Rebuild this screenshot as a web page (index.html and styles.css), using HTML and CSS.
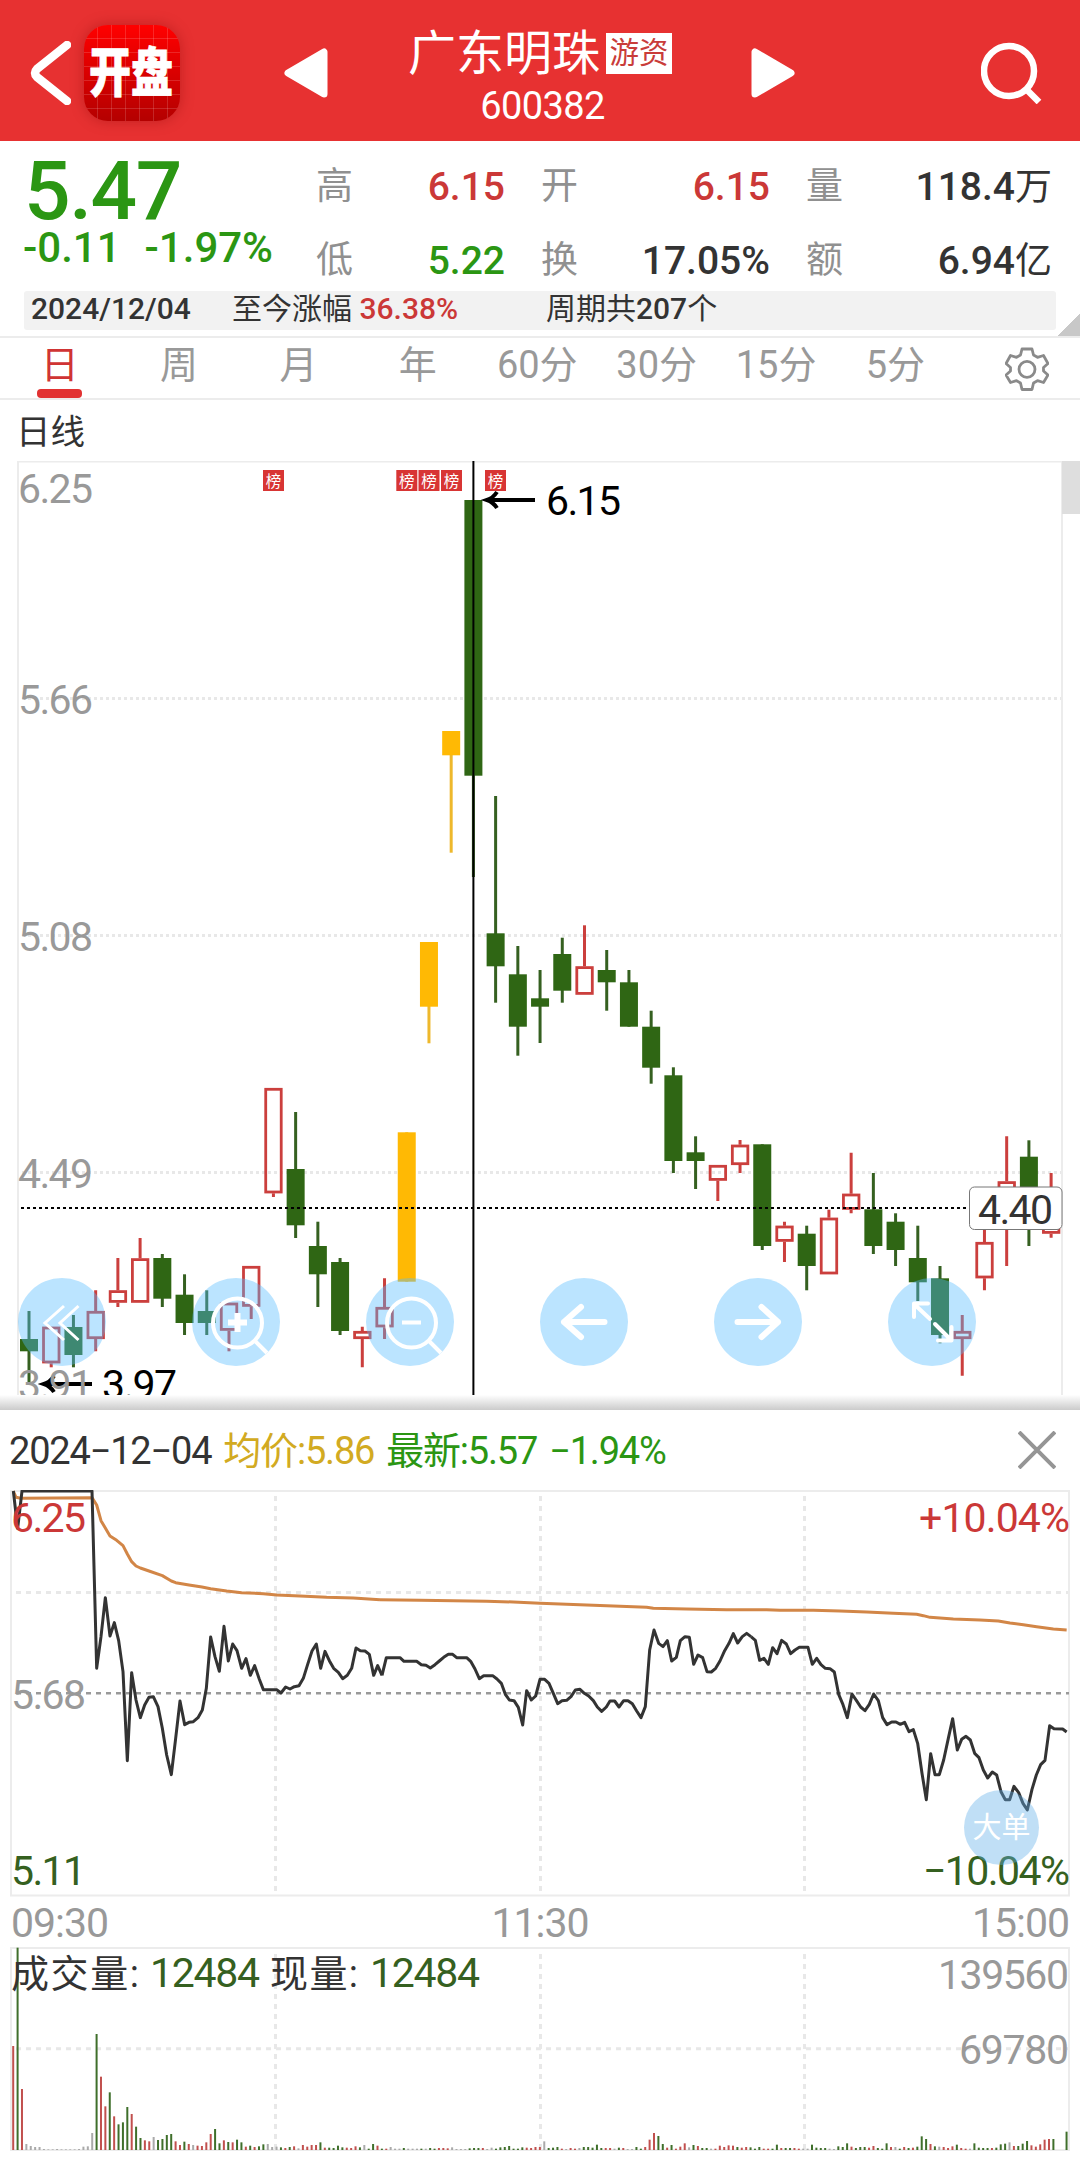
FILE: index.html
```html
<!DOCTYPE html>
<html lang="zh-CN">
<head>
<meta charset="UTF-8">
<title>广东明珠 600382</title>
<meta name="viewport" content="width=device-width, initial-scale=1.0">
<link rel="stylesheet" href="styles.css">
</head>
<body>

<!-- Header -->
<header class="header">
  <svg class="back" viewBox="0 0 41 64"><path d="M37 4 L7 28 Q3 32 7 36 L37 60"/></svg>
  <div class="logo"><span>开盘</span></div>
  <svg class="prev" viewBox="0 0 44 50"><path d="M4 25 L40 4 V46 Z"/></svg>
  <div class="title">
    <div class="name">广东明珠<span class="tag">游资</span></div>
    <div class="code">600382</div>
  </div>
  <svg class="next" viewBox="0 0 44 50"><path d="M40 25 L4 4 V46 Z"/></svg>
  <svg class="search" viewBox="0 0 61 62"><circle cx="28" cy="29" r="25"/><path d="M46 48 L58 60"/></svg>
</header>

<!-- Quote -->
<section class="quote">
  <div class="quote-top">
    <div class="last">
      <div class="price">5.47</div>
      <div class="change"><span>-0.11</span><span>-1.97%</span></div>
    </div>
    <div class="stats">
      <div class="stat"><label>高</label><b class="up">6.15</b></div>
      <div class="stat"><label>开</label><b class="up">6.15</b></div>
      <div class="stat"><label>量</label><b>118.4<small>万</small></b></div>
      <div class="stat"><label>低</label><b class="down">5.22</b></div>
      <div class="stat"><label>换</label><b>17.05%</b></div>
      <div class="stat"><label>额</label><b>6.94<small>亿</small></b></div>
    </div>
  </div>
  <div class="period">
    <span class="date">2024/12/04</span>
    <span>至今涨幅 <b class="up">36.38%</b></span>
    <span>周期共<b>207</b>个</span>
  </div>
  <i class="corner"></i>
</section>

<!-- Period tabs -->
<nav class="tabs">
  <a class="active">日</a>
  <a>周</a>
  <a>月</a>
  <a>年</a>
  <a>60分</a>
  <a>30分</a>
  <a>15分</a>
  <a>5分</a>
  <svg class="gear" viewBox="0 0 44 44">
    <path d="M17 2 H27 L28.5 8 L32.5 10.3 L38.5 8.5 L43 16.5 L38.5 20.5 V24 L43 28 L38.5 35.5 L32.5 33.7 L28.5 36 L27 42.5 H17 L15.5 36 L11.5 33.7 L5.5 35.5 L1 28 L5.5 24 V20.5 L1 16.5 L5.5 8.5 L11.5 10.3 L15.5 8 Z"/>
    <circle cx="22" cy="22.3" r="8"/>
  </svg>
</nav>

<h3 class="chart-title">日线</h3>

<!-- K line -->
<div class="kline">
  <svg id="kline" viewBox="0 461 1080 934">
    <g class="grid dots">
      <path d="M22 698.5 H1062 M22 935.5 H1062 M22 1172.5 H1062"/>
    </g>
    <path class="frame" d="M18 1395 V461.5 H1062 V1395"/>
    <rect class="scroll" x="1062" y="461" width="18" height="53"/>
    <g id="candles"></g>
    <g id="marks"></g>
    <path class="cross" d="M473.4 461 V1395"/>
    <path class="cross dots" d="M21 1208 H968"/>
    <path class="pointer" d="M535 500 H489 M497 492 Q493 498 487 500 Q493 502 497 508"/>
    <text class="num black" x="546" y="515" textLength="75">6.15</text>
    <path class="pointer" d="M92 1384 H45 M54 1376 Q50 1382 44 1384 Q50 1386 54 1392"/>
    <text class="num black" x="102" y="1399" textLength="75">3.97</text>
    <g class="num gray">
      <text x="18" y="502.5" textLength="75">6.25</text>
      <text x="18" y="714" textLength="75">5.66</text>
      <text x="18" y="951" textLength="75">5.08</text>
      <text x="18" y="1188" textLength="75">4.49</text>
      <text x="18" y="1399" textLength="75">3.91</text>
    </g>
    <rect class="price-box" x="969.5" y="1187" width="92.5" height="42.5" rx="5"/>
    <text class="num dark" x="978" y="1223.5" textLength="75">4.40</text>
  </svg>
  <div class="tools">
    <button><svg viewBox="0 0 88 88"><path class="thin" d="M46 28 L27 45 L46 62 M60.5 28 L42 45 L60.5 62"/></svg></button>
    <button><svg viewBox="0 0 88 88"><circle cx="45.5" cy="45" r="24.5"/><path d="M63 63 L75 75"/><path class="bold" d="M36 44.5 H55 M45.5 35 V54"/></svg></button>
    <button><svg viewBox="0 0 88 88"><circle cx="45.5" cy="45" r="24.5"/><path d="M63 63 L75 75 M36 44.5 H55"/></svg></button>
    <button><svg viewBox="0 0 88 88"><path class="bold round" d="M64.5 44 H24 M41 29 L24 44 L41 59"/></svg></button>
    <button><svg viewBox="0 0 88 88"><path class="bold round" d="M23.5 44 H64 M47.5 29 L64 44 L47.5 59"/></svg></button>
    <button><svg viewBox="0 0 88 88"><path class="round" d="M42 41 L26 26 M40 25.5 H26 V39 M47 46 L63 62 M63.5 49 V62.5 H50"/></svg></button>
  </div>
</div>

<!-- Intraday panel -->
<section class="intraday">
  <div class="shadow"></div>
  <div class="intraday-head">
    <span class="day">2024−12−04</span>
    <span class="avg">均价:5.86</span>
    <span class="new">最新:5.57</span>
    <span class="new">−1.94%</span>
    <svg class="close" viewBox="0 0 38 38"><path d="M1 1 L37 37 M37 1 L1 37"/></svg>
  </div>

  <div class="minute">
    <svg viewBox="0 1490 1080 407">
      <path class="frame" d="M11 1491 H1069 V1895.5 H11 Z"/>
      <g class="grid dash">
        <path d="M16 1592.5 H1068"/>
        <path d="M275.5 1496 V1894 M540.5 1496 V1894 M804.5 1496 V1894"/>
      </g>
      <path class="zero" d="M16 1693.3 H1069"/>
      <!-- average price -->
      <g class="avg-line" transform="translate(0 1450) scale(.33333)">
        <polyline points="40,123 48,142 62,145 276,143 290,165 303,212 330,258 350,271 369,287 382,312 395,335 408,348 421,354 447,363 487,377 514,393 527,398 567,405 606,411 632,416 680,423 725,428 790,431 830,435 900,438 980,442 1060,444 1140,449"/>
        <polyline transform="translate(1140 300)" points="0,149 60,150 120,151 220,152 320,154 400,156 480,160 560,163 640,166 700,168 760,170 800,172 820,175 920,177 1040,179 1080,179"/>
        <polyline transform="translate(2220 360)" points="0,119 80,119 120,121 220,121 300,123 380,126 460,130 530,133 550,137 570,142 640,147 720,150 775,153 810,159 850,164 890,170 940,177 980,180"/>
      </g>
      <!-- price -->
      <g class="price-line" transform="translate(0 1450) scale(.33333)">
        <polyline points="40,123 53,235 66,123 276,123 290,655 303,560 316,443 330,558 343,518 356,572 369,665 382,932 395,668 408,750 421,803 434,765 447,742 460,740 474,770 487,835 500,915 514,974 527,865 540,753 554,824 567,817 580,815 594,803 607,780 619,715 632,561 645,620 658,664 672,529 685,633 698,582 711,602 725,655 738,626 751,676 764,647 778,688 790,719 830,719 843,729 857,711 870,717 883,710 897,707 910,685 923,643 936,603 949,582 962,655 975,604 988,632 1001,655 1015,667 1028,686 1042,676 1055,655 1068,594 1081,602 1095,603 1108,613 1121,676 1133,647 1146,676"/>
        <polyline transform="translate(1140 300)" points="6,376 19,323 60,323 72,334 110,334 124,344 138,346 151,354 165,344 178,333 191,322 205,313 218,313 230,323 260,323 272,334 285,357 298,386 311,377 338,377 351,387 364,400 376,433 388,450 402,452 415,472 428,525 440,422 454,450 467,438 480,388 494,388 507,400 520,430 533,461 546,452 560,451 573,440 586,420 600,418 613,430 626,438 640,452 652,471 665,484 679,471 690,453 704,453 717,471 731,452 744,452 757,461 770,483 783,503 796,470 809,300 822,240 836,280 849,290 862,272 875,333 889,322 901,272 915,260 928,262 941,343 954,315 968,323 981,365 994,366 1007,355 1020,333 1034,302 1047,280 1060,251 1073,279 1087,260 1100,250 1113,260"/>
        <polyline transform="translate(2220 360)" points="33,200 46,211 59,271 72,265 85,283 98,233 111,251 125,211 139,222 152,251 165,240 178,232 204,232 217,283 230,265 243,284 256,295 270,296 283,306 296,373 309,404 322,443 336,372 349,391 362,411 375,422 388,403 401,372 415,392 428,443 441,464 455,456 468,456 481,463 494,457 507,485 520,479 533,520 546,610 559,689 572,551 585,614 598,614 611,570 625,505 638,446 652,540 665,508 678,499 691,510 704,550 717,563 730,600 743,624 757,606 770,615 783,665 796,689 809,689 822,649 836,668 849,700 862,720 876,658 889,615 902,584 915,571 929,467 942,476 968,477 980,486"/>
      </g>
      <text class="num red" x="11" y="1532" textLength="75">6.25</text>
      <text class="num gray" x="11" y="1709" textLength="75">5.68</text>
      <text class="num green" x="11" y="1885" textLength="75">5.11</text>
      <text class="num red" x="919" y="1532" textLength="151">+10.04%</text>
      <text class="num green" x="923" y="1885" textLength="147">−10.04%</text>
    </svg>
    <button class="big-order">大单</button>
  </div>

  <div class="times"><span>09:30</span><span>11:30</span><span>15:00</span></div>

  <svg class="volume" viewBox="0 1947 1080 205">
    <path class="frame" d="M11 1948 H1069 V2150 H11 Z"/>
    <g class="grid dash">
      <path d="M16 2048.7 H1068"/>
      <path d="M275.5 1954 V2149 M540.5 1954 V2149 M804.5 1954 V2149"/>
    </g>
    <g id="volume"></g>
    <text class="label dark" x="11" y="1986.5" textLength="128">成交量:</text>
    <text class="num green" x="150" y="1987" textLength="110">12484</text>
    <text class="label dark" x="270" y="1986.5" textLength="88">现量:</text>
    <text class="num green" x="370" y="1987" textLength="110">12484</text>
    <text class="num gray" x="938" y="1989" textLength="131">139560</text>
    <text class="num gray" x="959" y="2064" textLength="110">69780</text>
  </svg>
</section>

<script>
const NS = 'http://www.w3.org/2000/svg';

function add(parent, tag, attrs, text) {
  const el = document.createElementNS(NS, tag);
  for (const key in attrs) el.setAttribute(key, attrs[key]);
  if (text) el.textContent = text;
  parent.appendChild(el);
}

// [type, high, body top, body bottom, low]   g: down  r: up  y: limit up
const candles = [
  ['g', 1311, 1339, 1351.3, 1382.7],
  ['r', 1326.7, 1326.7, 1363.3, 1367.3],
  ['g', 1315, 1327, 1355, 1367.3],
  ['r', 1290.3, 1311, 1339, 1351.3],
  ['r', 1258, 1290.3, 1302.7, 1307],
  ['r', 1238, 1258.3, 1302.7, 1302.7],
  ['g', 1254, 1258, 1298.7, 1307],
  ['g', 1274.3, 1294.7, 1323, 1335],
  ['g', 1290.3, 1311, 1323, 1335],
  ['r', 1302.7, 1302.7, 1330.7, 1351.3],
  ['r', 1266, 1266, 1306.7, 1319],
  ['r', 1088, 1088, 1193.3, 1197],
  ['g', 1112, 1169, 1225.3, 1238],
  ['g', 1221.7, 1246, 1274.3, 1307],
  ['g', 1258, 1262, 1331, 1335],
  ['r', 1326.7, 1331, 1339, 1367.3],
  ['r', 1278.3, 1307, 1327.3, 1339],
  ['y', 1132.3, 1132.3, 1281.7, 1281.7],
  ['y', 942, 942, 1006.7, 1043.3],
  ['y', 731, 731, 755.3, 852.7],
  ['g', 500, 500, 775.7, 877],
  ['g', 796, 933.3, 966.3, 1002.7],
  ['g', 946, 974.3, 1026.7, 1055.7],
  ['g', 970, 998.3, 1006.7, 1043],
  ['g', 937.7, 954, 990.7, 1002.7],
  ['r', 925.3, 966.3, 994.7, 994.7],
  ['g', 950, 970, 982.3, 1010.7],
  ['g', 970, 982.3, 1026.7, 1026.7],
  ['g', 1010.7, 1026.7, 1067.7, 1083.7],
  ['g', 1067.3, 1075.3, 1161, 1173],
  ['g', 1136.3, 1152.3, 1161, 1189],
  ['r', 1165, 1165, 1180.7, 1201],
  ['r', 1140, 1144.7, 1165, 1173],
  ['g', 1144.3, 1144.3, 1246, 1250],
  ['r', 1221.7, 1225.7, 1241.7, 1262],
  ['g', 1225.7, 1233.7, 1266, 1290.3],
  ['r', 1209.7, 1217.7, 1274.3, 1274.3],
  ['r', 1152.7, 1193.7, 1209.7, 1213.3],
  ['g', 1173, 1209.3, 1246, 1254],
  ['g', 1213.3, 1221.7, 1250, 1266],
  ['g', 1225.7, 1258, 1282.3, 1301],
  ['g', 1266, 1278.3, 1335, 1343.3],
  ['r', 1315, 1331, 1339, 1375.7],
  ['r', 1225, 1242, 1278.3, 1290.3],
  ['r', 1136.3, 1181.3, 1229.5, 1266],
  ['g', 1140.3, 1156.7, 1210, 1246],
  ['r', 1173, 1200, 1233.7, 1237.7]
];
const candleBox = document.getElementById('candles');
candles.forEach(([type, high, top, bottom, low], i) => {
  const x = 29 + 22.22 * i;
  if (type === 'r') {
    // hollow body, so the wick is drawn in two parts
    add(candleBox, 'path', { class: 'wick r', d: `M${x} ${high} V${top} M${x} ${bottom} V${low}` });
    add(candleBox, 'rect', { class: 'hollow', x: x - 7.7, y: top + 1.3, width: 15.5, height: bottom - top - 2.6 });
  } else {
    add(candleBox, 'path', { class: 'wick ' + type, d: `M${x} ${high} V${low}` });
    add(candleBox, 'rect', { class: type, x: x - 9, y: top, width: 18, height: bottom - top });
  }
});

// 龙虎榜 marks
const markBox = document.getElementById('marks');
[263, 396.3, 418.5, 441, 485].forEach(x => {
  add(markBox, 'rect', { x: x, y: 470, width: 21, height: 21 });
  add(markBox, 'text', { x: x + 10.5, y: 486.5 }, '榜');
});

// Volume per minute, in thirds of a pixel. r: up  g: down  w: flat
const volumes = `r312 g607 r183 w18 w12 w9 w9 w3 w2 w2 w3 w2 w2 w2 w2 w3 w10 w11 w51 g348
r220 r131 g173 r101 g77 g83 g129 r108 g70 g36 r29 r26 w39 g30 g33 g45 g48 r26 r15 g25
r18 w15 r13 r12 r23 r48 g63 g20 r29 g24 r23 g31 g23 r10 g13 r9 g11 g17 w18 w9
w10 g8 r6 g9 r11 w5 r15 r10 r15 r15 g23 r7 g7 g6 g13 g8 r7 r6 r11 g8
w15 g4 g18 r13 g4 r4 w9 w4 w4 g6 w4 w4 w4 g4 w4 g6 g4 r6 r6 r5
w8 w3 w3 w3 g5 g6 g6 r6 w3 w7 g4 g8 g9 g12 g4 g4 g8 r7 r6 r9
r9 w26 g6 g7 g9 r4 w3 r6 r4 w6 g9 g9 g7 g16 g6 r6 r6 w4 g7 r6
w3 w3 g9 g4 r9 r31 r51 g42 g18 r7 g15 r4 r10 r20 w8 g15 r12 g6 g6 w4
r4 r13 r9 r14 r13 g9 r7 r9 g8 g4 g9 r4 r4 g4 g16 r6 g6 g6 r6 r4
w4 w4 g16 g7 g6 g6 w4 w3 g11 g9 g20 r10 g6 g9 g9 r7 r12 g6 g4 g20
r9 w9 g4 r9 g6 r7 g10 g41 g33 r18 g11 w10 r9 r6 r11 g16 r6 r4 w4 g20
g7 g6 g6 r6 g7 g17 g19 w23 r12 g12 g19 g27 r14 r10 r17 r31 r33 g33 w0 w0 g55`.split(/\s+/);
const volumeBox = document.getElementById('volume');
volumes.forEach((v, i) => {
  const h = v.slice(1) / 3;
  add(volumeBox, 'rect', { class: v[0], x: 12.2 + 4.389 * i, y: 2150 - h, width: 2, height: h });
});
</script>
</body>
</html>
```
FILE: styles.css
```css
* {
  box-sizing: border-box;
}
body {
  margin: 0;
  width: 1080px;
  height: 2158px;
  overflow: hidden;
  background: #fff;
  color: #333;
  font-family: Roboto, "Noto Sans CJK SC", sans-serif;
}
svg {
  display: block;
  fill: none;
}
button {
  padding: 0;
  border: none;
  font-family: inherit;
}

/* Header */
.header {
  display: flex;
  align-items: center;
  height: 141px;
  padding: 5px 0 0 30px;
  background: #e73131;
  color: #fff;
}
.back {
  width: 41px;
  height: 64px;
  stroke: #fff;
  stroke-width: 8.5;
  stroke-linecap: round;
}
.logo {
  display: flex;
  align-items: center;
  justify-content: center;
  width: 96px;
  height: 96px;
  margin-left: 13px;
  border-radius: 24px;
  background:
    repeating-linear-gradient(90deg, transparent 0 13px, rgba(255,255,255,.15) 13px 14px),
    repeating-linear-gradient(transparent 0 13px, rgba(255,255,255,.15) 13px 14px),
    linear-gradient(#f00, #b40000);
  box-shadow: 0 0 14px rgba(120,0,0,.35);
}
.logo span {
  font-size: 42px;
  font-weight: 900;
  line-height: 46px;
  transform: translate(-1px, 1px) scaleY(1.28);
  -webkit-text-stroke: .6px #fff;
}
.prev, .next {
  width: 44px;
  height: 50px;
  fill: #fff;
  stroke: #fff;
  stroke-width: 7;
  stroke-linejoin: round;
}
.prev {
  margin-left: 104px;
}
.next {
  margin-left: 79px;
}
.title {
  align-self: flex-start;
  width: 264px;
  margin: 24px 0 0 80px;
  text-align: center;
}
.name {
  display: flex;
  align-items: center;
  height: 50px;
  font-size: 48px;
  line-height: 50px;
  white-space: nowrap;
}
.tag {
  width: 66px;
  height: 41px;
  margin: -1px 0 0 6px;
  background: #fff;
  color: #c93c3a;
  font-size: 29.5px;
  line-height: 40px;
}
.code {
  margin: 5px 0 0 5px;
  font-size: 38px;
  line-height: 44px;
  letter-spacing: -.6px;
}
.search {
  width: 61px;
  height: 62px;
  margin-left: 186px;
  stroke: #fff;
  stroke-width: 6.5;
}

/* Quote */
.up {
  color: #cb3837;
}
.down, .last {
  color: #2b9613;
}
.quote {
  position: relative;
  height: 197px;
  padding: 0 24px;
  border-bottom: 2px solid #ececec;
}
.quote-top {
  display: flex;
  height: 150px;
}
.last {
  width: 293px;
  padding-top: 10px;
  font-weight: 500;
}
.price {
  font-size: 82px;
  line-height: 80px;
  letter-spacing: -1.4px;
}
.change {
  display: flex;
  gap: 24px;
  margin-left: -1px;
  font-size: 42px;
  line-height: 34px;
}
.stats {
  display: grid;
  grid-template-columns: 189px 227px 244px;
  grid-auto-rows: 50px;
  gap: 24px 38px;
  margin-left: -1px;
  padding-top: 21px;
}
.stat {
  display: flex;
  justify-content: space-between;
  font-size: 39px;
  line-height: 50px;
}
.stat:nth-child(3n+2) label, .stat:nth-child(3n) label {
  margin-left: -2px;
}
.stat label {
  color: #909090;
  font-size: 37px;
}
.stat small {
  font-size: 37px;
  font-weight: 400;
}
.stat b, .period b, .date {
  font-weight: 500;
}
.period {
  display: grid;
  grid-template-columns: 201px 314px auto;
  height: 39px;
  padding-left: 7px;
  border-radius: 3px;
  background: #f2f2f2;
  font-size: 30px;
  line-height: 36px;
  white-space: nowrap;
}
.corner {
  position: absolute;
  right: 0;
  bottom: 0;
  width: 22px;
  height: 22px;
  background: linear-gradient(135deg, transparent 50%, #c8c8c8 50%);
}

/* Tabs */
.tabs {
  display: flex;
  height: 62px;
  border-bottom: 2px solid #ececec;
}
.tabs a {
  display: flex;
  flex-direction: column;
  align-items: center;
  width: 119.4px;
  padding-top: 1px;
  color: #999;
  font-size: 38px;
  line-height: 52px;
}
.tabs .active {
  color: #d03434;
}
.tabs .active::after {
  content: "";
  flex: none;
  width: 45px;
  height: 9px;
  margin-top: -2px;
  border-radius: 4px;
  background: #e23232;
}
.gear {
  width: 44px;
  height: 44px;
  margin: 9px 0 0 50px;
  stroke: #8a8a8a;
  stroke-width: 2.8;
  stroke-linejoin: round;
}
.chart-title {
  height: 61px;
  margin: 0;
  padding-left: 16px;
  font-size: 34.5px;
  font-weight: 400;
  line-height: 64px;
}

/* Charts */
.frame {
  stroke: #ececec;
  stroke-width: 2;
}
.grid {
  stroke: #e8e8e8;
  stroke-width: 3;
}
.dots {
  stroke-dasharray: 3 3;
}
.dash {
  stroke-dasharray: 5 5;
}
.num {
  font-size: 41px;
}
.label {
  font-size: 38px;
}
.gray { fill: #999; }
.dark { fill: #333; }
.black { fill: #000; }
.red { fill: #cb3837; }
.green { fill: #356020; }

/* K line */
.kline {
  position: relative;
  height: 934px;
}
.scroll {
  fill: #dedede;
}
.cross {
  stroke: #000;
  stroke-width: 2;
}
.pointer {
  stroke: #000;
  stroke-width: 4;
}
.wick {
  stroke-width: 3;
}
.wick.g { stroke: #356020; }
.wick.r { stroke: #cb3f3d; }
.wick.y { stroke: #eeb82c; }
#candles rect.g { fill: #2f6614; }
#candles rect.y { fill: #ffb904; }
.hollow {
  stroke: #cb3f3d;
  stroke-width: 2.8;
}
#marks rect {
  fill: #d83534;
}
#marks text {
  fill: #fff;
  font-size: 15.5px;
  text-anchor: middle;
}
.price-box {
  fill: #fff;
  stroke: #777;
  stroke-width: 1;
}
.tools {
  position: absolute;
  left: 18px;
  top: 817px;
  display: flex;
  gap: 86px;
}
.tools button {
  width: 88px;
  height: 88px;
  border-radius: 50%;
  background: rgba(85,187,255,.4);
}
.tools svg {
  stroke: #fff;
  stroke-width: 4;
}
.tools .thin {
  stroke-width: 3;
}
.tools .bold {
  stroke-width: 6;
}
.tools .round {
  stroke-linecap: round;
  stroke-linejoin: round;
}

/* Intraday */
.shadow {
  height: 15px;
  background: linear-gradient(#fff, #cbcbcb);
}
.intraday-head {
  display: flex;
  gap: 12px;
  height: 80px;
  padding: 15px 24px 0 9px;
  font-size: 38px;
  line-height: 53px;
  letter-spacing: -1.2px;
  white-space: nowrap;
}
.avg {
  color: #d2aa22;
}
.new {
  color: #2b9613;
}
.close {
  width: 38px;
  height: 38px;
  margin: 6px 0 0 auto;
  stroke: #959595;
  stroke-width: 4;
}
.minute {
  position: relative;
  height: 407px;
}
.zero {
  stroke: #999;
  stroke-width: 2.6;
  stroke-dasharray: 5 5;
}
.avg-line, .price-line {
  stroke-width: 9;
  stroke-linejoin: round;
}
.avg-line {
  stroke: #d28647;
}
.price-line {
  stroke: #333;
}
.big-order {
  position: absolute;
  left: 964px;
  top: 300px;
  width: 75px;
  height: 75px;
  border-radius: 50%;
  background: rgba(97,176,232,.4);
  color: #fff;
  font-size: 29px;
  line-height: 77px;
}
.times {
  display: flex;
  justify-content: space-between;
  height: 50px;
  padding: 0 11px;
  color: #999;
  font-size: 41px;
  line-height: 52px;
  letter-spacing: -1px;
}
#volume .r { fill: #c1504e; }
#volume .g { fill: #3f6f2b; }
#volume .w { fill: #aaa; }
```
